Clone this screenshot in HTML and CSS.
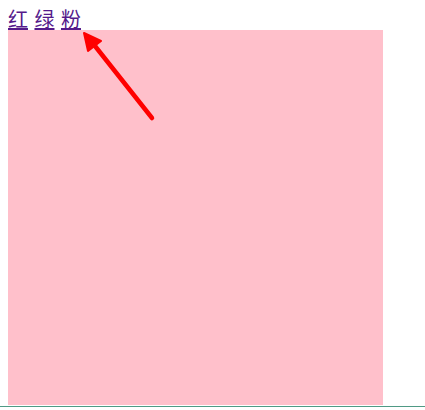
FILE: index.html
```html
<!DOCTYPE html>
<html lang="zh">
<head>
<meta charset="utf-8">
<link rel="stylesheet" href="styles.css">
</head>
<body>
<main class="page">
  <nav class="nav"><a href="#red" class="link">红</a> <a href="#green" class="link">绿</a> <a href="#pink" class="link">粉</a></nav>
  <div class="box"></div>
</main>
<div class="rule"></div>
<svg class="arrow" width="425" height="410" viewBox="0 0 425 410">
  <line x1="152" y1="118" x2="95" y2="46" stroke="#ff0000" stroke-width="4.5" stroke-linecap="round"/>
  <polygon points="84,33 101,41 88,51" fill="#ff0000" stroke="#ff0000" stroke-width="2" stroke-linejoin="round"/>
</svg>
</body>
</html>
```
FILE: styles.css
```css
html, body { background: #fff; }
html { overflow: hidden; }
body {
  margin: 0;
  font-family: "Noto Sans CJK SC", "Noto Sans", sans-serif;
  font-size: 20px;
}
.page { padding: 8px 8px 0; }
.nav { line-height: 22px; height: 22px; word-spacing: 2px; }
.link { color: #551a8b; text-decoration: underline; }
.box { width: 375px; height: 375px; background: #ffc0cb; }
.rule { margin-top: 1px; width: 100%; height: 1px; background: #4f9a85; }
.arrow { position: absolute; left: 0; top: 0; pointer-events: none; }
```
